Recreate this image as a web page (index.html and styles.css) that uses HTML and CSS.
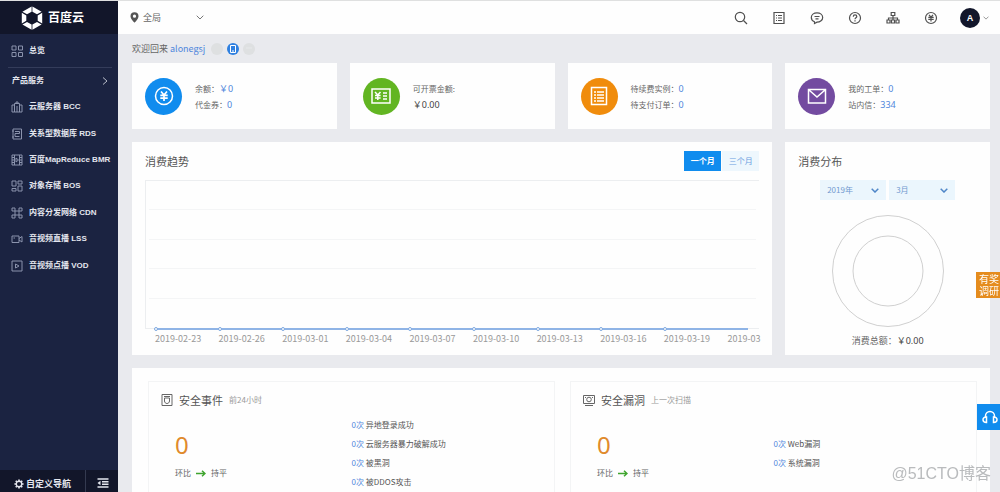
FILE: index.html
```html
<!DOCTYPE html>
<html lang="zh-CN">
<head>
<meta charset="utf-8">
<meta name="viewport" content="width=device-width, initial-scale=1">
<title>百度云 - 总览</title>
<link rel="stylesheet" href="styles.css">
</head>
<body>
<div class="shell">
  <aside class="sidebar">
    <a class="brand" href="#">
      <svg class="brand-mark" viewBox="0 0 22 24" aria-hidden="true"><path fill="#fff" d="M10.600.5v5.200L6 8.300 1.400 5.700zM11.400.5v5.200L16 8.300l4.600-2.600zM.8 6.800l4.500 2.600v5.400L.8 17.400zM21.200 6.800l-4.500 2.600v5.400l4.500 2.600zM1.400 18.500 6 15.900l4.600 2.600v5.200zM20.600 18.500 16 15.900l-4.600 2.600v5.200z"/></svg>
      <span>百度云</span>
    </a>
    <nav class="nav">
      <a class="nav-link nav-home" href="#">
        <svg class="nav-icon" viewBox="0 0 12 12"><path d="M1 1h4v4H1zM7.500 1h4v4h-4zM1 7.500h4v4H1zM7.500 7.500h4v4h-4z"/></svg>总览
      </a>
      <button class="nav-group" type="button">产品服务
        <svg class="group-arrow" viewBox="0 0 6 8"><path d="M1 .5 5 4 1 7.500"/></svg>
      </button>
      <ul class="nav-list">
        <li><a class="nav-link" href="#"><svg class="nav-icon" viewBox="0 0 12 12"><path d="M1 4h2.500v7H1zM3.500 11V2.500h5V11M8.500 4H11v7H3.500M5 2.500V1h2v1.500M6 5v6"/></svg>云服务器 BCC</a></li>
        <li><a class="nav-link" href="#"><svg class="nav-icon" viewBox="0 0 12 12"><path d="M2 1h8.500v10H2zM1 3h2M1 9h2M4 3.500h4.500v2H4v3h4.500"/></svg>关系型数据库 RDS</a></li>
        <li><a class="nav-link" href="#"><svg class="nav-icon" viewBox="0 0 12 12"><path d="M1 1h10v10H1zM3.500 1v10M8.500 1v10M1 3.500h2.500M1 6h2.500M1 8.500h2.500M8.500 3.500H11M8.500 6H11M8.500 8.500H11M5 4l2.500 2L5 8z"/></svg>百度MapReduce BMR</a></li>
        <li><a class="nav-link" href="#"><svg class="nav-icon" viewBox="0 0 12 12"><path d="M1 1h4v5H1zM7 1h4v3H7zM7 6h4v5H7zM1 8.500h4V11H1z"/></svg>对象存储 BOS</a></li>
        <li><a class="nav-link" href="#"><svg class="nav-icon" viewBox="0 0 12 12"><path d="M4 4h4v4H4zM1 1h3v3H1zM8 1h3v3H8zM1 8h3v3H1zM8 8h3v3H8z"/></svg>内容分发网络 CDN</a></li>
        <li><a class="nav-link" href="#"><svg class="nav-icon" viewBox="0 0 12 12"><path d="M1 3h7v6.500H1zM8 5.500l3-2v5.500l-3-2M2.500 5H4"/></svg>音视频直播 LSS</a></li>
        <li><a class="nav-link" href="#"><svg class="nav-icon" viewBox="0 0 12 12"><path d="M1 1h10v10H1zM4.500 4 8 6 4.500 8z"/></svg>音视频点播 VOD</a></li>
      </ul>
    </nav>
    <div class="sidebar-foot">
      <button class="foot-custom" type="button">
        <svg class="gear" viewBox="0 0 12 12"><circle cx="6" cy="6" r="3.300" fill="none" stroke="#e4e6ee" stroke-width="1.600"/><path stroke="#e4e6ee" stroke-width="2" d="M6 .5v2M6 9.500v2M.5 6h2M9.500 6h2M2.100 2.100l1.400 1.400M8.500 8.500l1.400 1.400M9.900 2.100 8.500 3.500M3.500 8.500 2.100 9.900"/></svg>自定义导航
      </button>
      <button class="foot-fold" type="button" aria-label="收起导航">
        <svg viewBox="0 0 12 10"><path fill="none" stroke="#e4e6ee" stroke-width="1.500" d="M.5 1h11M5 3.700h6.500M5 6.300h6.500M.5 9h11"/><path fill="#e4e6ee" d="M3.500 2.800v4.400L.5 5z"/></svg>
      </button>
    </div>
  </aside>

  <div class="page">
    <header class="topbar">
      <button class="region" type="button">
        <svg class="pin" viewBox="0 0 9 11"><path fill="#555" fill-rule="evenodd" d="M4.500.3A4 4 0 0 0 .5 4.300C.5 7 4.500 10.800 4.500 10.800S8.500 7 8.500 4.300A4 4 0 0 0 4.500.3zm0 2.300a1.600 1.600 0 1 1 0 3.200 1.600 1.600 0 0 1 0-3.200z"/></svg>
        <span class="region-name">全局</span>
        <svg class="caret" viewBox="0 0 8 5"><path d="M.7.700 4 4 7.300.7"/></svg>
      </button>
      <div class="tools">
        <button class="tool" type="button" aria-label="搜索"><svg viewBox="0 0 14 14"><circle cx="6" cy="6" r="4.700"/><path d="m9.500 9.500 3.500 3.500"/></svg></button>
        <button class="tool" type="button" aria-label="账单"><svg viewBox="0 0 14 14"><path d="M2 1.500h10v11H2zM4 4.500h1M6 4.500h4M4 7h1M6 7h4M4 9.500h1M6 9.500h4"/></svg></button>
        <button class="tool" type="button" aria-label="消息"><svg viewBox="0 0 14 14"><path d="M4.500 10.800C2.500 10 1.300 8.500 1.300 6.500c0-2.600 2.500-4.600 5.700-4.600s5.700 2 5.700 4.600S10.200 11.200 7 11.200L4.500 12.600zM4.500 5.500h5M5.500 7.800h3"/></svg></button>
        <button class="tool" type="button" aria-label="帮助"><svg viewBox="0 0 14 14"><circle cx="7" cy="7" r="5.500"/><path d="M5.300 5.700C5.300 3.300 8.800 3.500 8.800 5.500 8.800 6.800 7 6.800 7 8.300M7 9.300v1.200"/></svg></button>
        <button class="tool" type="button" aria-label="组织"><svg viewBox="0 0 14 14"><path d="M5.200 1.500h3.600v3H5.200zM7 4.500V9M2.500 9V7h9v2M1 9h3v3H1zM5.500 9h3v3h-3zM10 9h3v3h-3z"/></svg></button>
        <button class="tool" type="button" aria-label="费用"><svg viewBox="0 0 14 14"><circle cx="7" cy="7" r="5.500"/><path d="m5 3.800 2 2.400 2-2.400M4.300 6.400h5.400M4.300 8.300h5.400M7 6.400v4"/></svg></button>
        <button class="account" type="button" aria-label="账户"><span class="avatar">A</span><svg class="caret caret-small" viewBox="0 0 8 5"><path d="M.7.700 4 4 7.300.7"/></svg></button>
      </div>
    </header>

    <main class="content">
      <div class="welcome">
        <span class="hello">欢迎回来 <a href="#">alonegsj</a></span>
        <span class="badge"></span>
        <span class="badge badge-on"><svg viewBox="0 0 12 12"><path fill="none" stroke="#fff" d="M3.500 2.500h5v7h-5zM5 8h2"/></svg></span>
        <span class="badge"><svg viewBox="0 0 12 12"><path fill="none" stroke="#e6e8ea" d="M3 5h6"/></svg></span>
      </div>

      <section class="overview">
        <article class="card stat">
          <span class="disc disc-blue"><svg viewBox="0 0 20 20"><circle cx="10" cy="10" r="8.500"/><path stroke-width="1.700" d="m7 5.500 3 3.500 3-3.500M6.300 9.400h7.400M6.300 12.200h7.400M10 9v6"/></svg></span>
          <div class="stat-text">
            <p>余额：<a href="#">￥0</a></p>
            <p>代金券：<a href="#">0</a></p>
          </div>
        </article>
        <article class="card stat">
          <span class="disc disc-green"><svg viewBox="0 0 20 20"><path d="M1 3h18v14H1zM4 6l2.800 3L9.500 6M4 9.500h5.600M4 12h5.600M6.800 9v5M12 7h4M12 10h4M12 13h4"/></svg></span>
          <div class="stat-text">
            <p>可开票金额:</p>
            <p><span class="amount">￥0.00</span></p>
          </div>
        </article>
        <article class="card stat">
          <span class="disc disc-orange"><svg viewBox="0 0 20 20"><path d="M2.500 1.500h15v17h-15zM5 6h2M8 6h7M5 9h2M8 9h7M5 12h2M8 12h7M5 15h2M8 15h7"/></svg></span>
          <div class="stat-text">
            <p>待续费实例：<a href="#">0</a></p>
            <p>待支付订单：<a href="#">0</a></p>
          </div>
        </article>
        <article class="card stat">
          <span class="disc disc-purple"><svg viewBox="0 0 20 20"><path d="M1.500 3.500h17v13.500h-17zM2 4l8 7 8-7"/></svg></span>
          <div class="stat-text">
            <p>我的工单：<a href="#">0</a></p>
            <p>站内信：<a href="#">334</a></p>
          </div>
        </article>
      </section>

      <section class="spend">
        <article class="card trend">
          <div class="trend-head">
            <h2>消费趋势</h2>
            <div class="range">
              <button class="range-btn range-on" type="button">一个月</button>
              <button class="range-btn" type="button">三个月</button>
            </div>
          </div>
          <div class="plot"><i></i><i></i><i></i><i></i><i></i></div>
          <ol class="dates">
            <li>2019-02-23</li><li>2019-02-26</li><li>2019-03-01</li><li>2019-03-04</li><li>2019-03-07</li><li>2019-03-10</li><li>2019-03-13</li><li>2019-03-16</li><li>2019-03-19</li><li>2019-03</li>
          </ol>
        </article>
        <article class="card share">
          <h2>消费分布</h2>
          <div class="pickers">
            <label class="picker"><select aria-label="年份"><option>2019年</option></select><svg viewBox="0 0 8 5"><path d="m.7.700 3.300 3.300L7.300.7"/></svg></label>
            <label class="picker"><select aria-label="月份"><option>3月</option></select><svg viewBox="0 0 8 5"><path d="m.7.700 3.300 3.300L7.300.7"/></svg></label>
          </div>
          <svg class="donut" viewBox="0 0 112 112"><circle cx="56" cy="56" r="55.500"/><circle cx="56" cy="56" r="35"/></svg>
          <p class="total">消费总额：<span class="amount">￥0.00</span></p>
        </article>
      </section>

      <section class="card security">
        <article class="sec">
          <div class="sec-head">
            <svg viewBox="0 0 12 12"><path d="M1 .5h10v11H1zM3 2.500h6M3.500 4h5v3c0 1.500-1.200 2.500-2.500 2.500S3.500 8.500 3.500 7z"/></svg>
            <h2>安全事件</h2><small>前24小时</small>
          </div>
          <div class="sec-body">
            <div class="sec-sum">
              <strong>0</strong>
              <p>环比 <svg class="flat" viewBox="0 0 10 7"><path d="M0 3.500h9M6 .7l3 2.800-3 2.800"/></svg> 持平</p>
            </div>
            <ul class="sec-list">
              <li><a href="#">0次</a> 异地登录成功</li>
              <li><a href="#">0次</a> 云服务器暴力破解成功</li>
              <li><a href="#">0次</a> 被黑洞</li>
              <li><a href="#">0次</a> 被DDOS攻击</li>
            </ul>
          </div>
        </article>
        <article class="sec">
          <div class="sec-head">
            <svg viewBox="0 0 12 12"><path d="M.5 1.500h11v8H.5zM2 11.500h8M2 3.500h1M9 3.500h1"/><circle cx="6" cy="5.500" r="2.300"/></svg>
            <h2>安全漏洞</h2><small>上一次扫描</small>
          </div>
          <div class="sec-body">
            <div class="sec-sum">
              <strong>0</strong>
              <p>环比 <svg class="flat" viewBox="0 0 10 7"><path d="M0 3.500h9M6 .7l3 2.800-3 2.800"/></svg> 持平</p>
            </div>
            <ul class="sec-list">
              <li><a href="#">0次</a> Web漏洞</li>
              <li><a href="#">0次</a> 系统漏洞</li>
            </ul>
          </div>
        </article>
      </section>
    </main>
  </div>
</div>

<a class="float-survey" href="#">有奖<br>调研</a>
<button class="float-help" type="button" aria-label="客服"><svg viewBox="0 0 16 14"><path d="M3.500 7.500V6a4.500 4.500 0 0 1 9 0v1.500M4.500 7v5.500C2.500 12.500 1 11.500 1 9.800S2.500 7 4.500 7zM11.500 7v5.500c2 0 3.500-1 3.500-2.700S13.500 7 11.500 7z"/></svg></button>
<span class="watermark">@51CTO博客</span>
</body>
</html>
```
FILE: styles.css
```css
*, *::before { box-sizing: border-box; }

body {
  margin: 0;
  font-family: "Noto Sans CJK SC", sans-serif;
  font-size: 8px;
  line-height: 16px;
  color: #666;
  background: #e9eaee;
}

h2, p, ul, ol { margin: 0; padding: 0; }
ul, ol { list-style: none; }
h2 { font-size: 11px; line-height: 20px; font-weight: 400; color: #555; }
a { color: #4f86dc; text-decoration: none; }
svg { display: block; flex: none; }
button {
  margin: 0;
  padding: 0;
  border: 0;
  background: none;
  color: inherit;
  font: inherit;
  cursor: pointer;
}

.shell {
  display: flex;
  height: 100vh;
  border-top: 1px solid #dfe0e0;
}

/* Sidebar */
.sidebar {
  flex: 0 0 118px;
  display: flex;
  flex-direction: column;
  background: #1b2341;
  color: #e4e6ee;
  font-family: "Liberation Sans", "Noto Sans CJK SC", sans-serif;
  font-weight: 700;
}
.brand {
  display: flex;
  align-items: center;
  gap: 5px;
  height: 33px;
  padding-left: 21px;
  background: #12162a;
  color: #fff;
  font-size: 12px;
}
.brand-mark { width: 22px; height: 24px; }
.nav { flex: 1; }
.nav-link {
  display: flex;
  align-items: center;
  gap: 6px;
  height: 100%;
  padding-left: 11px;
  color: inherit;
  white-space: nowrap;
}
.nav-home { height: 33px; }
.nav-icon {
  width: 12px;
  height: 12px;
  fill: none;
  stroke: #8b93ad;
  stroke-width: 1;
}
.nav-group {
  display: flex;
  align-items: center;
  justify-content: space-between;
  width: 104px;
  height: 27px;
  margin-left: 8px;
  padding: 0 4px;
  border-top: 1px solid #343c5a;
}
.group-arrow { width: 6px; height: 8px; fill: none; stroke: #b9bdca; }
.nav-list { display: grid; grid-auto-rows: 1fr; min-height: 185px; }
.sidebar-foot { display: flex; height: 22px; background: #12162a; }
.foot-custom {
  flex: 1;
  display: flex;
  align-items: center;
  justify-content: center;
  gap: 2px;
  padding-top: 5px;
  font-size: 9px;
}
.gear { width: 10px; height: 10px; }
.foot-fold {
  width: 33px;
  padding: 4px 0 0 11px;
  border-left: 1px solid #343a50;
}
.foot-fold svg { width: 12px; height: 10px; }

/* Header */
.page { flex: 1; min-width: 0; display: flex; flex-direction: column; }
.topbar {
  display: flex;
  flex: 0 0 33px;
  align-items: center;
  justify-content: space-between;
  padding: 0 11px 0 12px;
  background: #fefefe;
}
.region { display: flex; align-items: center; width: 74px; font-size: 9px; }
.region-name { flex: 1; padding-left: 4px; text-align: left; }
.pin { width: 9px; height: 11px; }
.caret { width: 8px; height: 5px; fill: none; stroke: #777; }
.caret-small { width: 6px; height: 4px; }
.tools { display: flex; align-items: center; }
.tool { width: 38px; }
.tool svg {
  width: 14px;
  height: 14px;
  margin: 0 auto;
  fill: none;
  stroke: #505050;
  stroke-width: 1.200;
}
.account { display: flex; align-items: center; gap: 3px; margin-left: 10px; }
.avatar {
  width: 20px;
  border-radius: 50%;
  background: #12162a;
  color: #fff;
  font: 700 9px/20px "Liberation Sans", sans-serif;
}

/* Content */
.content {
  flex: 1;
  min-height: 0;
  padding: 0 10px 0 14px;
  overflow-y: auto;
  scrollbar-width: none;
}
.card { background: #fefefe; }
.welcome {
  display: flex;
  align-items: center;
  gap: 4px;
  height: 29px;
  font-size: 9px;
}
.hello { padding-right: 2px; }
.badge { width: 12px; height: 12px; border-radius: 50%; background: #dee0e1; }
.badge-on { background: #2f80e0; }

.overview { display: grid; grid-template-columns: repeat(4, 1fr); gap: 13px; }
.stat { display: flex; align-items: center; gap: 13px; height: 66px; padding: 0 13px; }
.stat-text { padding-top: 2px; }
.stat-text a, .amount {
  font-family: "Noto Sans", "Noto Sans CJK SC", sans-serif;
  font-size: 9px;
}
.amount { color: #444; }
.disc {
  display: grid;
  place-items: center;
  width: 37px;
  height: 37px;
  border-radius: 50%;
}
.disc svg { width: 20px; height: 20px; fill: none; stroke: #fff; stroke-width: 1.500; }
.disc-blue { background: #108cee; }
.disc-green { background: #62b522; }
.disc-orange { background: #f08c0c; }
.disc-purple { background: #734ba0; }

/* Spending */
.spend {
  display: grid;
  grid-template-columns: repeat(4, 1fr);
  gap: 13px;
  margin: 13px 0;
}
.spend .card { padding: 9px 13px 5px; }
.trend { grid-column: span 3; }
.trend-head { display: flex; justify-content: space-between; }
.range { display: flex; gap: 1px; }
.range-btn { width: 37px; height: 20px; background: #eef7fd; color: #6b9de0; }
.range-on { background: #108cee; color: #fff; font-weight: 700; }
.plot {
  display: grid;
  grid-auto-rows: 1fr;
  height: 149px;
  margin-top: 9px;
  border: 1px solid #eceef0;
  border-right: 0;
}
.plot i { margin: 0 3px; border-bottom: 1px solid #f4f5f6; }
.plot i:last-child { border: 0; }
.dates {
  display: grid;
  grid-template-columns: repeat(9, 2fr) 1fr;
  position: relative;
  padding-left: 10px;
  color: #999;
  font-size: 9px;
  line-height: 20px;
  white-space: nowrap;
}
.dates::before {
  content: "";
  position: absolute;
  left: 10px;
  right: 11px;
  top: -1px;
  height: 2px;
  background: #8fb4e6;
}
.dates li { position: relative; min-width: 0; }
.dates li:not(:last-child)::before {
  content: "";
  position: absolute;
  left: -1px;
  top: -2px;
  width: 4px;
  height: 4px;
  border: 1px solid #7ea8e0;
  border-radius: 50%;
  background: #fff;
}

.pickers { display: flex; justify-content: center; gap: 3px; margin-top: 9px; }
.picker { display: grid; align-items: center; width: 66px; background: #ebf6fd; }
.picker select, .picker svg { grid-area: 1 / 1; }
.picker select {
  width: 100%;
  height: 20px;
  padding: 0 7px;
  border: 0;
  appearance: none;
  background: transparent;
  color: #7199cf;
  font: inherit;
}
.picker svg {
  justify-self: end;
  width: 8px;
  height: 5px;
  margin-right: 7px;
  fill: none;
  stroke: #4f86c8;
  stroke-width: 1.500;
  pointer-events: none;
}
.donut {
  width: 112px;
  height: 112px;
  margin: 15px auto 5px;
  fill: none;
  stroke: #d0d0d0;
}
.total { font-size: 9px; line-height: 18px; text-align: center; }

/* Security */
.security {
  display: grid;
  grid-template-columns: 1fr 1fr;
  gap: 15px;
  padding: 13px 13px 13px 16px;
}
.sec {
  display: flex;
  flex-direction: column;
  border: 1px solid #f3f4f5;
  padding-bottom: 12px;
}
.sec-head { display: flex; align-items: center; padding: 8px 12px 0; }
.sec-head svg { width: 12px; height: 12px; fill: none; stroke: #666; }
.sec-head h2 { padding: 0 6px; }
.sec-head small { font-size: 8px; color: #999; }
.sec-body {
  flex: 1;
  display: grid;
  grid-template-columns: 1fr 1fr;
  align-items: center;
  padding-top: 5px;
}
.sec-sum { padding-left: 26px; }
.sec-sum strong {
  display: block;
  font-family: "Noto Sans", sans-serif;
  font-size: 24px;
  line-height: 40px;
  font-weight: 400;
  color: #e08a2c;
}
.sec-sum p { display: flex; align-items: center; gap: 5px; }
.flat { width: 10px; height: 7px; fill: none; stroke: #3fa52e; stroke-width: 1.500; }
.sec-list { line-height: 19px; color: #555; }

/* Overlays */
.float-survey {
  position: fixed;
  right: 0;
  top: 272px;
  padding: 1px 1px 1px 3px;
  background: #e58c1e;
  color: #fff;
  font-size: 10px;
  line-height: 12px;
  white-space: nowrap;
}
.float-help {
  position: fixed;
  right: 0;
  top: 404px;
  width: 23px;
  height: 26px;
  padding-left: 5px;
  background: #108cee;
}
.float-help svg { width: 16px; height: 14px; fill: none; stroke: #fff; stroke-width: 1.500; }
.watermark {
  position: fixed;
  right: 9px;
  bottom: 7px;
  color: #b9bbbd;
  font: 16px/22px "Liberation Sans", "Noto Sans CJK SC", sans-serif;
  pointer-events: none;
}
```
